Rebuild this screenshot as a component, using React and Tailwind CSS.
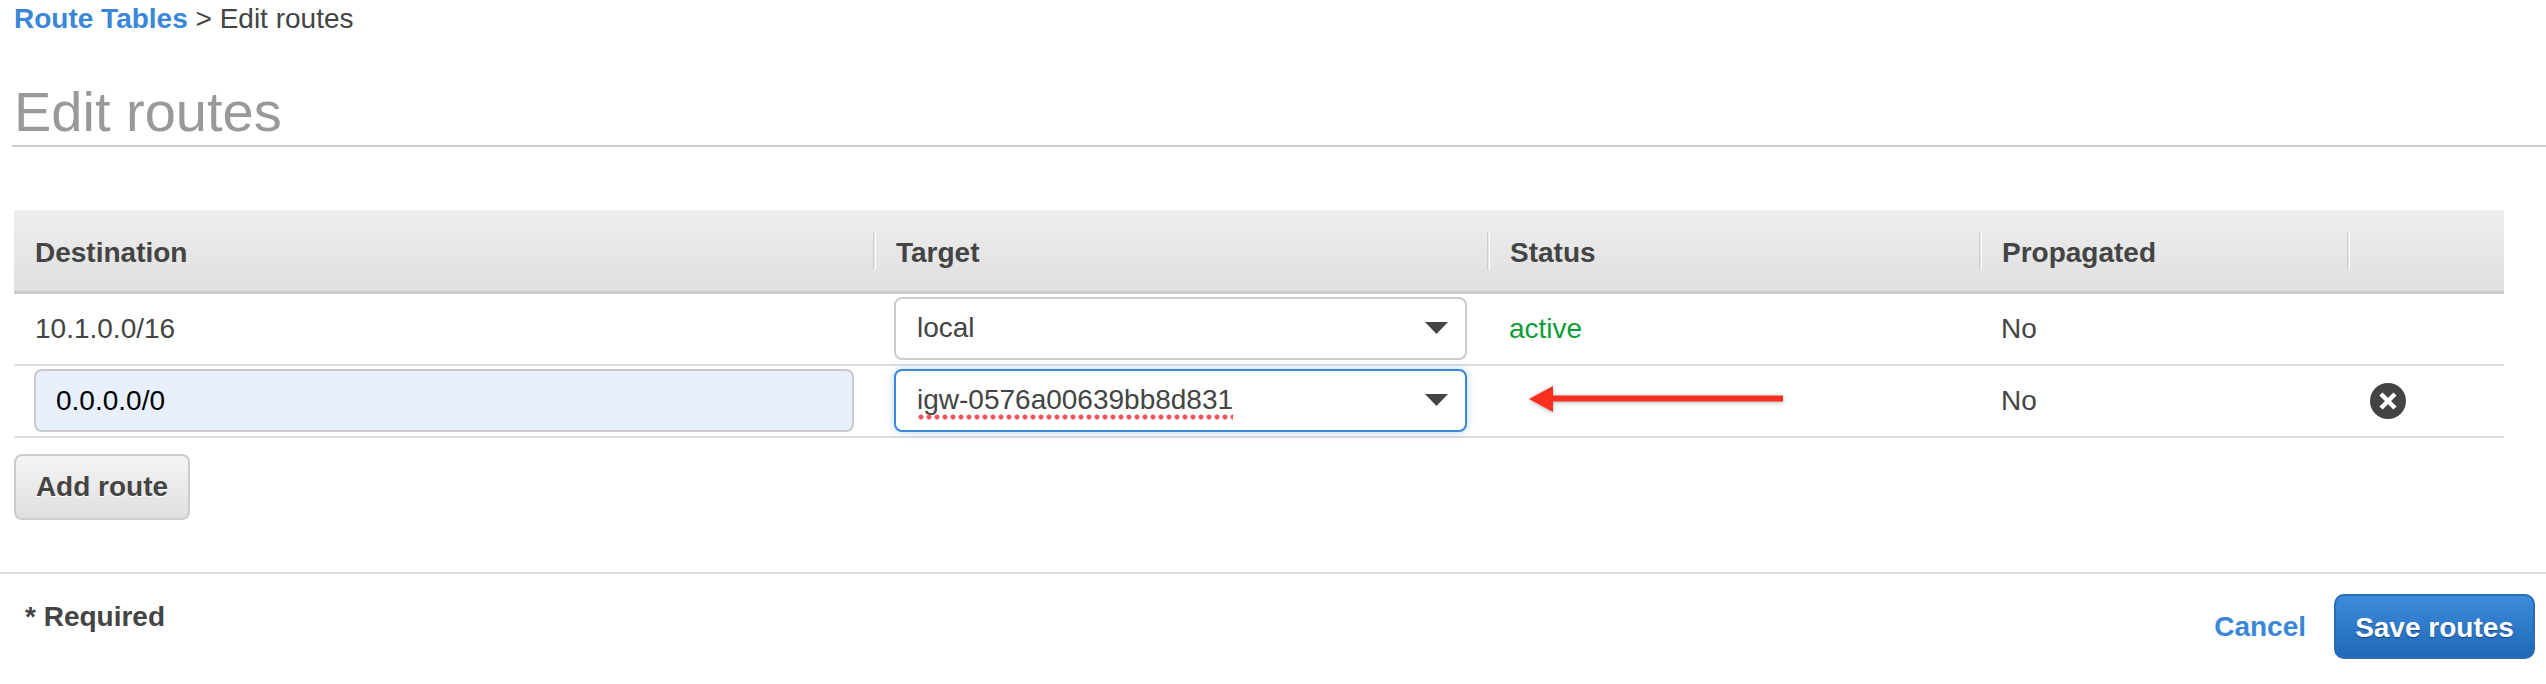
const font = "font-['Liberation_Sans',Arial,sans-serif]";

function HeadCell({ label, first }) {
  return (
    <div className="flex h-full items-center">
      {!first && <div className="h-[38px] w-[3px] border-l border-[#ccc] border-r border-r-white" />}
      <span className={`pt-[5px] font-bold text-[#444] ${first ? "pl-[21px]" : "pl-5"}`}>{label}</span>
    </div>
  );
}

function SelectBox({ value, focused, squiggle }) {
  return (
    <div
      className={`relative flex h-[63px] w-[573px] items-center justify-between rounded-[8px] bg-white pl-[21px] pr-[17px] text-[#444] ${
        focused
          ? "border-2 border-[#3a87d8] shadow-[0_0_8px_rgba(58,135,216,0.35)]"
          : "border-2 border-[#ccc]"
      }`}
    >
      <span className="relative">
        {value}
        {squiggle && (
          <span className="absolute bottom-[-6px] left-0 h-[6px] w-full bg-[radial-gradient(circle,#f2555a_2px,transparent_3px)] bg-[length:8px_6px]" />
        )}
      </span>
      <svg width="23" height="12" viewBox="0 0 23 12">
        <path d="M0 0H23L11.5 12Z" fill="#444" />
      </svg>
    </div>
  );
}

export default function App() {
  return (
    <div className={`${font} h-[684px] w-[2546px] overflow-hidden bg-white text-[28px] leading-none text-[#444]`}>
      {/* Breadcrumb */}
      <div className="pl-[14px] pt-[3px] leading-[32px]">
        <a className="font-bold text-[#3a87d8]">Route Tables</a>
        <span> &gt; Edit routes</span>
      </div>

      {/* Title */}
      <div className="ml-3 mt-[47px] h-[65px] border-b-2 border-[#ccc] pl-[2px] text-[56px] leading-[60px] text-[#999]">
        Edit routes
      </div>

      {/* Routes table */}
      <div className="ml-[14px] mr-[42px] mt-[63px]">
        <div className="grid h-[84px] grid-cols-[859px_614px_492px_368px_157px] border-b-[3px] border-[#ccc] bg-gradient-to-b from-[#eeeeee] to-[#e0e0e0]">
          <HeadCell label="Destination" first />
          <HeadCell label="Target" />
          <HeadCell label="Status" />
          <HeadCell label="Propagated" />
          <HeadCell label="" />
        </div>

        <div className="grid h-[72px] grid-cols-[859px_614px_492px_368px_157px] items-center border-b-2 border-[#ddd]">
          <div className="pl-[21px]">10.1.0.0/16</div>
          <div className="pb-[2px] pl-[21px]">
            <SelectBox value="local" />
          </div>
          <div className="pl-[22px] text-[#0f9d38]">active</div>
          <div className="pl-[22px]">No</div>
          <div />
        </div>

        <div className="grid h-[72px] grid-cols-[859px_614px_492px_368px_157px] items-center border-b-2 border-[#ddd]">
          <div className="pb-[2px] pl-5">
            <div className="flex h-[63px] w-[820px] items-center rounded-[8px] border-2 border-[#c9c9cd] bg-[#e8f0fd] pl-5 pt-[2px] text-black">
              0.0.0.0/0
            </div>
          </div>
          <div className="pb-[2px] pl-[21px]">
            <SelectBox value="igw-0576a00639bb8d831" focused squiggle />
          </div>
          <div className="pb-[4px] pl-[42px]">
            <svg width="256" height="28" viewBox="0 0 256 28" className="block drop-shadow-[0_1px_2px_rgba(0,0,0,0.3)]">
              <path d="M0 14L24 1V10.500H254V16.500H24V27Z" fill="#f9301f" />
            </svg>
          </div>
          <div className="pl-[22px]">No</div>
          <div className="pl-[23px]">
            <svg width="36" height="36" viewBox="0 0 36 36">
              <circle cx="18" cy="18" r="18" fill="#444" />
              <path d="M11 11L25 25M25 11L11 25" stroke="#fff" strokeWidth="4.5" />
            </svg>
          </div>
        </div>

        <button className="mt-[16px] block h-[66px] w-[176px] rounded-[8px] border-2 border-[#ccc] bg-gradient-to-b from-[#f4f4f4] to-[#e0e0e0] text-center font-bold text-[#444] [text-shadow:0_1px_0_#fff]">
          Add route
        </button>
      </div>

      {/* Footer */}
      <div className="mt-[52px] flex items-start justify-between border-t-2 border-[#ddd] pl-[25px] pr-[11px] pt-5">
        <div className="pt-[9px] font-bold">* Required</div>
        <div className="flex items-center gap-[28px]">
          <a className="font-bold text-[#3a87d8]">Cancel</a>
          <button className="h-[65px] w-[201px] rounded-[10px] border-2 border-[#2a6cb8] bg-gradient-to-b from-[#3d8bdc] to-[#1f68b8] pt-[2px] font-bold text-white [text-shadow:0_1px_1px_rgba(0,0,0,0.4)]">
            Save routes
          </button>
        </div>
      </div>
    </div>
  );
}
